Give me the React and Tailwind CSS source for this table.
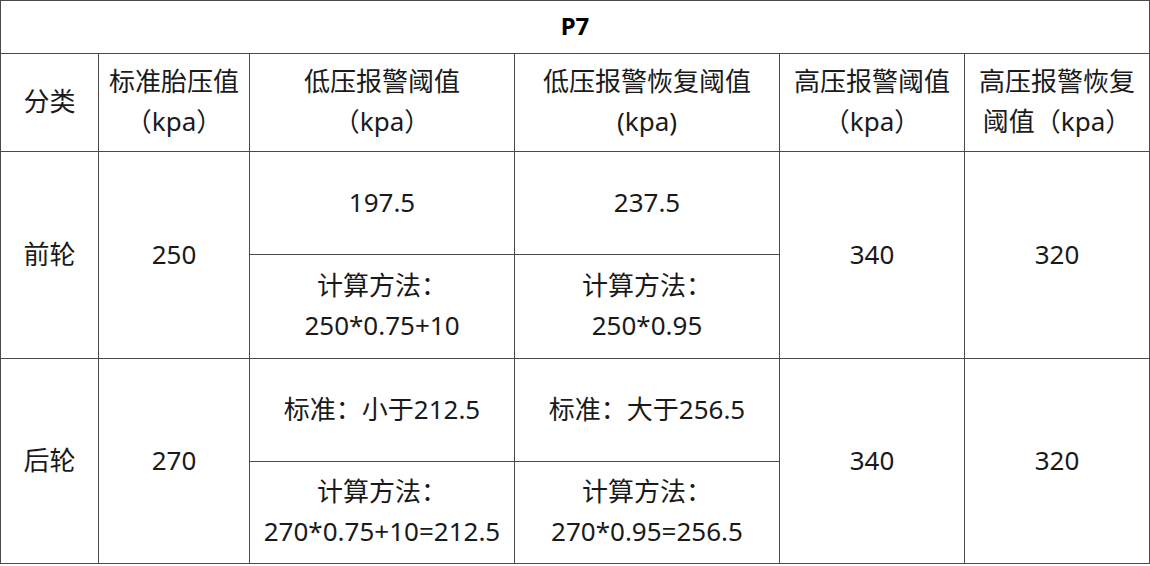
import React from "react";

const cell = "border border-[#4a4a4a] text-center align-middle px-0 pt-0 pb-[3px]";

export default function App() {
  return (
    <div className="w-[1150px] h-[566px] bg-white overflow-hidden">
      <table
        className="table-fixed border-collapse w-[1149px] text-[26px] leading-[40px] text-[#1a1a1a]"
        style={{ fontFamily: '"Noto Sans", "Noto Sans CJK SC", sans-serif' }}
      >
        <colgroup>
          <col className="w-[98px]" />
          <col className="w-[151px]" />
          <col className="w-[265px]" />
          <col className="w-[265px]" />
          <col className="w-[185px]" />
          <col className="w-[185px]" />
        </colgroup>
        <tbody>
          <tr className="h-[53px]">
            <td colSpan={6} className={`${cell} font-bold text-[24px] text-black`}>P7</td>
          </tr>
          <tr className="h-[98px]">
            <td className={cell}>分类</td>
            <td className={cell}>标准胎压值<br />（kpa）</td>
            <td className={cell}>低压报警阈值<br />（kpa）</td>
            <td className={cell}>低压报警恢复阈值<br />(kpa)</td>
            <td className={cell}>高压报警阈值<br />（kpa）</td>
            <td className={cell}>高压报警恢复<br />阈值（kpa）</td>
          </tr>
          <tr className="h-[103px]">
            <td rowSpan={2} className={cell}>前轮</td>
            <td rowSpan={2} className={cell}>250</td>
            <td className={cell}>197.5</td>
            <td className={cell}>237.5</td>
            <td rowSpan={2} className={cell}>340</td>
            <td rowSpan={2} className={cell}>320</td>
          </tr>
          <tr className="h-[104px]">
            <td className={cell}>计算方法：<br />250*0.75+10</td>
            <td className={cell}>计算方法：<br />250*0.95</td>
          </tr>
          <tr className="h-[103px]">
            <td rowSpan={2} className={cell}>后轮</td>
            <td rowSpan={2} className={cell}>270</td>
            <td className={cell}>标准：小于212.5</td>
            <td className={cell}>标准：大于256.5</td>
            <td rowSpan={2} className={cell}>340</td>
            <td rowSpan={2} className={cell}>320</td>
          </tr>
          <tr className="h-[102px]">
            <td className={cell}>计算方法：<br />270*0.75+10=212.5</td>
            <td className={cell}>计算方法：<br />270*0.95=256.5</td>
          </tr>
        </tbody>
      </table>
    </div>
  );
}
